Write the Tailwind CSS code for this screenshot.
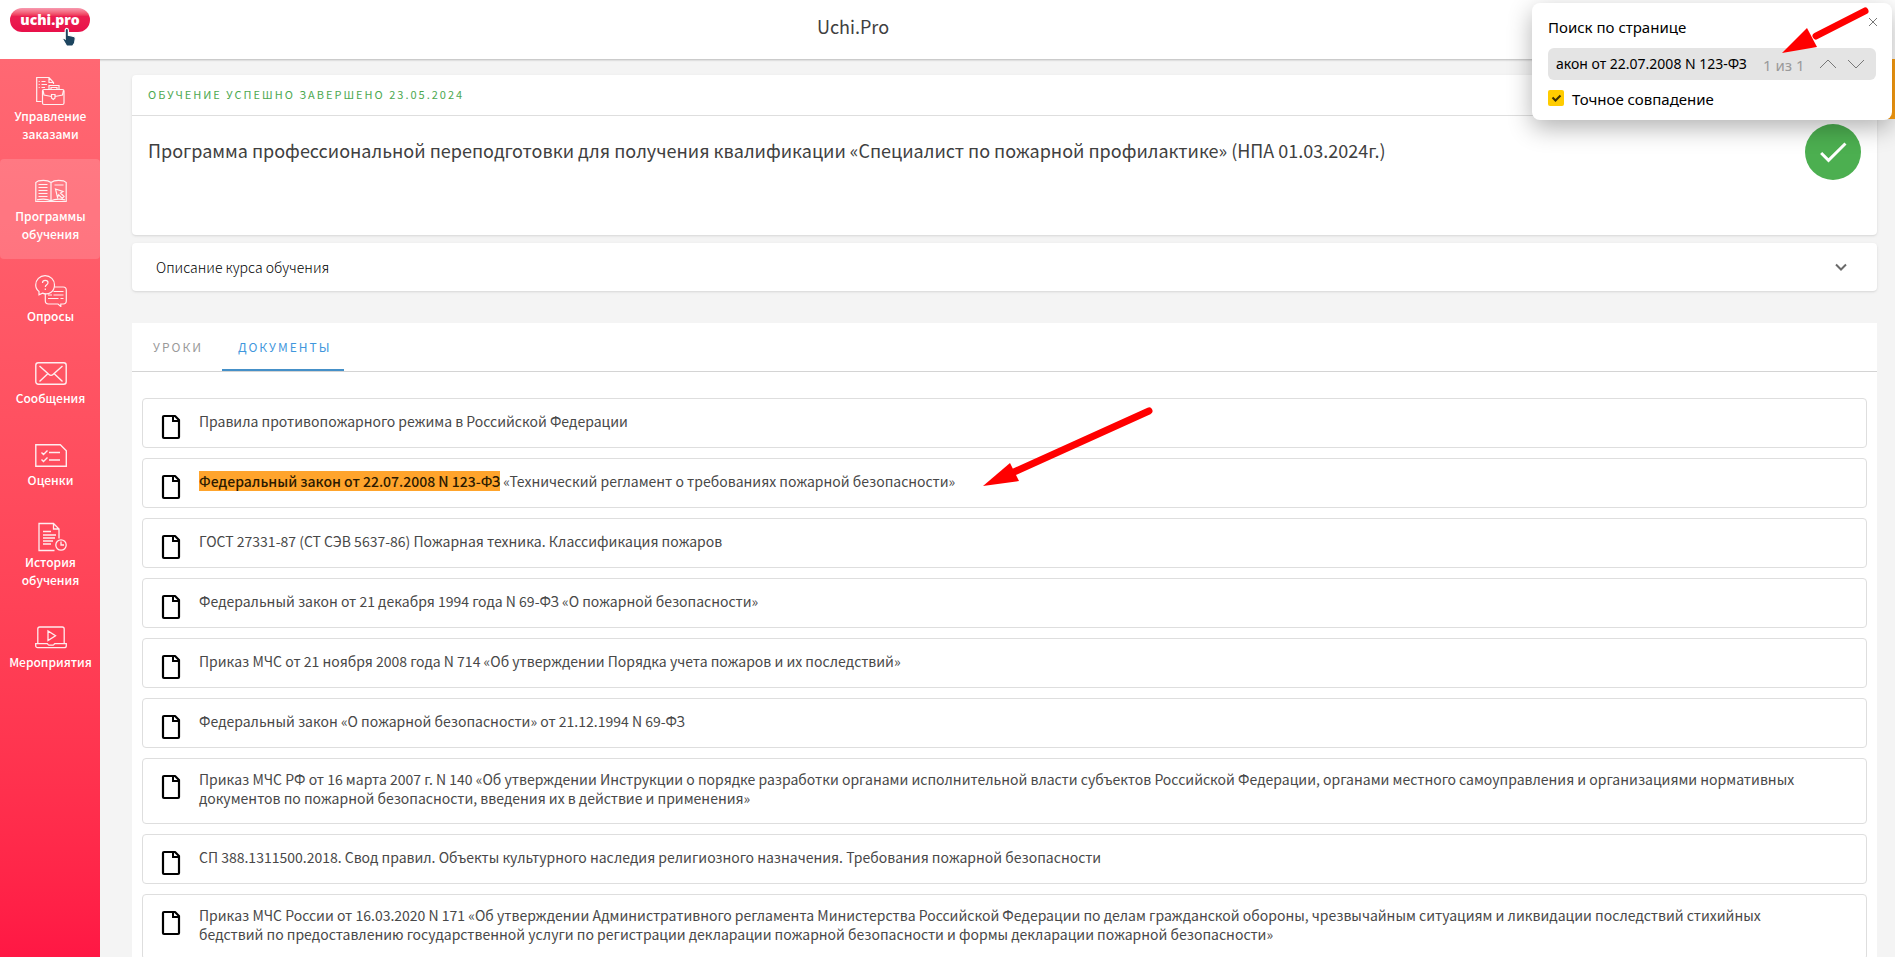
<!DOCTYPE html>
<html lang="ru">
<head>
<meta charset="utf-8">
<meta name="viewport" content="width=device-width, initial-scale=1">
<title>Uchi.Pro</title>
<script src="https://cdn.jsdelivr.net/npm/@tailwindcss/browser@4"></script>
</head>
<body class="relative flex h-screen flex-col overflow-hidden bg-[#f4f4f4] font-['Noto_Sans_CJK_SC','Noto_Sans',sans-serif] text-[#404040]">

<svg class="hidden" aria-hidden="true">
  <symbol id="doc" viewBox="0 0 24 30">
    <path d="M5 4h11l4 4V25a1 1 0 0 1-1 1H5a1 1 0 0 1-1-1V5a1 1 0 0 1 1-1z" fill="none" stroke="#000" stroke-width="2.200" stroke-linejoin="round"/>
    <path d="M14 4v5h6" fill="none" stroke="#000" stroke-width="2"/>
  </symbol>
</svg>

<header class="flex h-[59px] shrink-0 items-start bg-white shadow-[0_1px_2px_rgba(0,0,0,0.25)]">
  <a href="#" aria-label="uchi.pro" class="relative w-[100px] px-[10px] pt-2">
    <span class="flex h-6 items-center justify-center rounded-full bg-linear-to-b from-[#f79ab0] from-0% via-[#ec1f50] via-35% to-[#e8104a] font-['Open_Sans',sans-serif] text-[14px] font-extrabold leading-none text-white">uchi.pro</span>
    <svg class="absolute left-[60px] top-[27px] h-[21px] w-[17px]" viewBox="0 0 17 21"><path d="M5.200 3.300c0-2.600 3.200-2.600 3.200 0v5l5.300 1.200c1.100.3 1.700 1 1.600 2.200l-.7 4.300-2 3H6.600L3 12.800c-.6-1 .2-1.800 1.200-1.500l1 .8z" fill="#1d455f" stroke="#fff" stroke-width="1.200"/></svg>
  </a>
  <h1 class="flex-1 pt-3 text-center text-[18px] leading-7">Uchi.Pro</h1>
  <div class="w-[289px]"></div>
</header>

<div class="flex min-h-0 flex-1">
  <nav class="z-10 w-[100px] shrink-0 bg-linear-to-b from-[#ff6873] to-[#ff1744] text-center text-[12px] font-medium leading-[18px] text-white">
    <a href="#" class="flex flex-col items-center py-4 pl-px">
      <svg class="size-8" viewBox="0 0 32 32" fill="none" stroke="#fff" stroke-opacity=".9" stroke-width="1.200">
        <path d="M6.500 26.500H1.700V2.500H14l4.500 5v1.500M14 2.500v5h4.500M6.500 6.500h4M6.500 9.500h5.500M6.500 12.500H10M3.700 6.500h1M3.700 9.500h1M3.700 12.500h1"/>
        <path d="M14 14v-3.500h10V14M16 14v-1.500h6V14"/><rect x="7.500" y="14.500" width="21.500" height="15" rx="1.500"/><path d="M8 15.500l1 4.500 7.500 1.500M28.500 15.500l-1 4.500-7.500 1.500M16.500 19.500H20v3.500L18.300 24.500 16.500 23z"/>
      </svg>
      Управление<br>заказами
    </a>
    <a href="#" aria-current="page" class="flex flex-col items-center rounded bg-white/15 py-4 pl-px">
      <svg class="size-8" viewBox="0 0 32 32" fill="none" stroke="#fff" stroke-opacity=".9" stroke-width="1.200">
        <path d="M16 7.500C13.500 5.500 8.500 5 3.500 5.800L.8 7.500v19h30.400v-19l-2.700-1.700C23.500 5 18.500 5.500 16 7.500zM16 7.500V26M3.500 9.500H12.500M3.500 12.500H12.500M3.500 15.500H12.500M3.500 18.500H12.500M3.500 21.500H12.500M19.500 10H28.500M2 24.800c5-1 10.500-.8 14 1 3.500-1.800 9-2 14-1"/>
        <path d="M20.500 14l7.500 2.500-2.500 1.500 3.500 3.500-1.800 1.800-3.500-3.500-1.200 2.700z"/>
      </svg>
      Программы<br>обучения
    </a>
    <a href="#" class="flex flex-col items-center py-4 pl-px">
      <svg class="size-8" viewBox="0 0 32 32" fill="none" stroke="#fff" stroke-opacity=".9" stroke-width="1.200">
        <path d="M4 16.500v3.300l3.500-1.700c6 2.500 12-1.600 12-8.200 0-5-4-9.200-9.400-9.200S.7 4.800.7 10c0 2.600 1.300 5 3.300 6.500zM19.500 12h8.800c2 0 3 1.300 3 3.300v10.500c0 2-1 3.200-3 3.200h-2.500v2.500L23 29h-9.500c-2 0-3.200-1.200-3.200-3.200v-7"/>
        <path d="M7.500 8c0-3.500 5.500-3.200 5.500-.3 0 2-2.700 2-2.700 4.300M10.300 13.500v1.500M18.500 16.500h10M13 20h4M18.500 20h10M13 23.500h10.500M25.500 23.500h3"/>
      </svg>
      Опросы
    </a>
    <a href="#" class="flex flex-col items-center py-4 pl-px">
      <svg class="size-8" viewBox="0 0 32 32" fill="none" stroke="#fff" stroke-opacity=".9" stroke-width="1.400">
        <rect x=".8" y="5.800" width="30.400" height="21.400" rx="2.500"/><path d="M4.500 9L14 17.500c1.200 1.200 2.800 1.200 4 0L27.500 9M4.500 24.500l8.500-8M27.500 24.500L19 16.500"/>
      </svg>
      Сообщения
    </a>
    <a href="#" class="flex flex-col items-center py-4 pl-px">
      <svg class="size-8" viewBox="0 0 32 32" fill="none" stroke="#fff" stroke-opacity=".9" stroke-width="1.400">
        <path d="M.8 5.800h24.500l6 6v15.500H.8zM6.500 13.500l2 2 4-4M14 13.500H25M6.500 20.500l2 2 4-4M14 21H25"/>
      </svg>
      Оценки
    </a>
    <a href="#" class="flex flex-col items-center py-4 pl-px">
      <svg class="size-8" viewBox="0 0 32 32" fill="none" stroke="#fff" stroke-opacity=".9" stroke-width="1.300">
        <path d="M19.500 29.500H4V2.500h14.500l5.500 5.500v9.500M18.500 2.500V8H24M8 10.500h8M8 14h13M8 17h12M8 20h10M8 23h8"/><circle cx="26" cy="24" r="5.200"/><path d="M26 20.500V24h3"/>
      </svg>
      История<br>обучения
    </a>
    <a href="#" class="flex flex-col items-center py-4 pl-px">
      <svg class="size-8" viewBox="0 0 32 32" fill="none" stroke="#fff" stroke-opacity=".9" stroke-width="1.300">
        <path d="M2.800 22.500V8c0-1.300.8-2 2-2h22.400c1.200 0 2 .7 2 2v14.500M.7 22.700h11.500c.7 0 .8 1.500 1.800 1.500h4c1 0 1.100-1.500 1.800-1.500h11.500v2c0 1.200-.8 2-2 2H2.700c-1.200 0-2-.8-2-2zM13 10v9.500l7.500-4.700z"/>
      </svg>
      Мероприятия
    </a>
  </nav>

  <main class="min-w-0 flex-1 overflow-hidden pl-8 pr-[18px] pt-4">
    <section class="h-40 rounded bg-white shadow">
      <p class="h-[41px] border-b border-[#dedede] px-4 text-[11px] leading-[38px] tracking-[2px] text-[#4ca850]">ОБУЧЕНИЕ УСПЕШНО ЗАВЕРШЕНО 23.05.2024</p>
      <div class="flex items-start justify-between px-4 pt-2">
        <h2 class="pt-3 text-[18px] leading-7">Программа профессиональной переподготовки для получения квалификации «Специалист по пожарной профилактике» (НПА 01.03.2024г.)</h2>
        <span class="flex size-14 shrink-0 items-center justify-center rounded-full bg-[#4caf50]">
          <svg class="size-9" viewBox="0 0 24 24"><path d="M9 16.200L4.800 12l-1.400 1.400L9 19 21 7l-1.400-1.400z" fill="#fff"/></svg>
        </span>
      </div>
    </section>

    <button type="button" class="mt-2 flex h-12 w-full items-center justify-between rounded bg-white pl-6 pr-6 text-left text-[14px] font-light text-black shadow">
      Описание курса обучения
      <svg class="size-6" viewBox="0 0 24 24"><path d="M7 9.500l5 5 5-5" fill="none" stroke="#6a6a6a" stroke-width="2"/></svg>
    </button>

    <section class="mt-8 bg-white pb-8">
      <div role="tablist" class="flex h-[49px] border-b border-[#d4d4d4] text-[12px] tracking-[2px]">
        <button type="button" role="tab" class="pl-[21px] pr-[19px] text-[#9a9a9a]">УРОКИ</button>
        <button type="button" role="tab" aria-selected="true" class="border-b-2 border-[#4590c8] pl-4 pr-[13px] pt-[2px] text-[#3f97dd]">ДОКУМЕНТЫ</button>
      </div>
      <ul class="flex flex-col gap-[10px] px-[10px] pt-[26px] text-[14px] leading-[19px] text-[#484848]">
        <li><a href="#" class="flex min-h-[50px] items-center gap-4 rounded border border-[#dedede] pl-4 pr-14"><svg class="mt-[13px] h-[30px] w-6 shrink-0 self-start"><use href="#doc"/></svg><span class="pb-[15px] pt-[11px]">Правила противопожарного режима в Российской Федерации</span></a></li>
        <li class="relative"><a href="#" class="flex min-h-[50px] items-center gap-4 rounded border border-[#dedede] pl-4 pr-14"><svg class="mt-[13px] h-[30px] w-6 shrink-0 self-start"><use href="#doc"/></svg><span class="pb-[15px] pt-[11px]"><mark class="bg-[#ffa42c] font-medium text-[#2b1a00]">Федеральный закон от 22.07.2008 N 123-ФЗ</mark> «Технический регламент о требованиях пожарной безопасности»</span></a>
          <svg class="pointer-events-none absolute -top-[53px] left-[838px] h-[84px] w-[176px]" viewBox="0 0 176 84"><path d="M169 6L34 67" stroke="#f00" stroke-width="7" stroke-linecap="round"/><path d="M3 81L30 58l9 18z" fill="#f00"/></svg>
        </li>
        <li><a href="#" class="flex min-h-[50px] items-center gap-4 rounded border border-[#dedede] pl-4 pr-14"><svg class="mt-[13px] h-[30px] w-6 shrink-0 self-start"><use href="#doc"/></svg><span class="pb-[15px] pt-[11px]">ГОСТ 27331-87 (СТ СЭВ 5637-86) Пожарная техника. Классификация пожаров</span></a></li>
        <li><a href="#" class="flex min-h-[50px] items-center gap-4 rounded border border-[#dedede] pl-4 pr-14"><svg class="mt-[13px] h-[30px] w-6 shrink-0 self-start"><use href="#doc"/></svg><span class="pb-[15px] pt-[11px]">Федеральный закон от 21 декабря 1994 года N 69-ФЗ «О пожарной безопасности»</span></a></li>
        <li><a href="#" class="flex min-h-[50px] items-center gap-4 rounded border border-[#dedede] pl-4 pr-14"><svg class="mt-[13px] h-[30px] w-6 shrink-0 self-start"><use href="#doc"/></svg><span class="pb-[15px] pt-[11px]">Приказ МЧС от 21 ноября 2008 года N 714 «Об утверждении Порядка учета пожаров и их последствий»</span></a></li>
        <li><a href="#" class="flex min-h-[50px] items-center gap-4 rounded border border-[#dedede] pl-4 pr-14"><svg class="mt-[13px] h-[30px] w-6 shrink-0 self-start"><use href="#doc"/></svg><span class="pb-[15px] pt-[11px]">Федеральный закон «О пожарной безопасности» от 21.12.1994 N 69-ФЗ</span></a></li>
        <li><a href="#" class="flex min-h-[50px] items-center gap-4 rounded border border-[#dedede] pl-4 pr-14"><svg class="mt-[13px] h-[30px] w-6 shrink-0 self-start"><use href="#doc"/></svg><span class="pb-[15px] pt-[11px]">Приказ МЧС РФ от 16 марта 2007 г. N 140 «Об утверждении Инструкции о порядке разработки органами исполнительной власти субъектов Российской Федерации, органами местного самоуправления и организациями нормативных документов по пожарной безопасности, введения их в действие и применения»</span></a></li>
        <li><a href="#" class="flex min-h-[50px] items-center gap-4 rounded border border-[#dedede] pl-4 pr-14"><svg class="mt-[13px] h-[30px] w-6 shrink-0 self-start"><use href="#doc"/></svg><span class="pb-[15px] pt-[11px]">СП 388.1311500.2018. Свод правил. Объекты культурного наследия религиозного назначения. Требования пожарной безопасности</span></a></li>
        <li><a href="#" class="flex min-h-[50px] items-center gap-4 rounded border border-[#dedede] pl-4 pr-14"><svg class="mt-[13px] h-[30px] w-6 shrink-0 self-start"><use href="#doc"/></svg><span class="pb-[15px] pt-[11px]">Приказ МЧС России от 16.03.2020 N 171 «Об утверждении Административного регламента Министерства Российской Федерации по делам гражданской обороны, чрезвычайным ситуациям и ликвидации последствий стихийных бедствий по предоставлению государственной услуги по регистрации декларации пожарной безопасности и формы декларации пожарной безопасности»</span></a></li>
      </ul>
    </section>
  </main>
</div>

<div class="absolute right-0 top-[59px] z-10 h-[60px] w-5 bg-[#ffa010]"></div>

<form class="absolute right-[3px] top-[3px] z-20 w-[360px] rounded-lg bg-white px-4 pb-[11px] pt-[14px] font-['Noto_Sans',sans-serif] text-[15px] leading-5 text-black shadow-[0_8px_24px_rgba(0,0,0,0.3)]">
  <label for="find" class="block">Поиск по странице</label>
  <button type="button" aria-label="Закрыть" class="absolute right-[13px] top-[13px]"><svg class="size-3" viewBox="0 0 12 12"><path d="M2 2l8 8M10 2l-8 8" stroke="#777" stroke-width="1"/></svg></button>
  <div class="mt-[11px] flex h-8 items-center rounded-md bg-[#e4e4e4] pl-2 pr-[10px]">
    <input id="find" type="text" value="акон от 22.07.2008 N 123-ФЗ" class="w-0 flex-1 text-[14px] outline-none">
    <span class="ml-2 w-[55px] pt-[2px] text-[#9a9a9a]">1 из 1</span>
    <button type="button" aria-label="Предыдущее"><svg class="h-4 w-5" viewBox="0 0 20 16"><path d="M2 12l8-8 8 8" fill="none" stroke="#777" stroke-width="1"/></svg></button>
    <button type="button" aria-label="Следующее" class="ml-2"><svg class="h-4 w-5" viewBox="0 0 20 16"><path d="M2 4l8 8 8-8" fill="none" stroke="#777" stroke-width="1"/></svg></button>
  </div>
  <label class="mt-[9px] flex items-start gap-2">
    <span class="relative mt-px size-4"><input type="checkbox" checked class="block size-4 appearance-none rounded-[2px] bg-[#fc0]"><svg class="pointer-events-none absolute inset-0 size-4" viewBox="0 0 16 16"><path d="M4.500 7.500l3 3 5-5" fill="none" stroke="#3a2e00" stroke-width="2"/></svg></span>
    Точное совпадение
  </label>
  <svg class="pointer-events-none absolute right-[22px] top-[3px] h-[50px] w-[92px]" viewBox="0 0 92 50"><path d="M87 5L38 30" stroke="#f00" stroke-width="7" stroke-linecap="round"/><path d="M4 47L29 22l10 19z" fill="#f00"/></svg>
</form>
</body>
</html>
